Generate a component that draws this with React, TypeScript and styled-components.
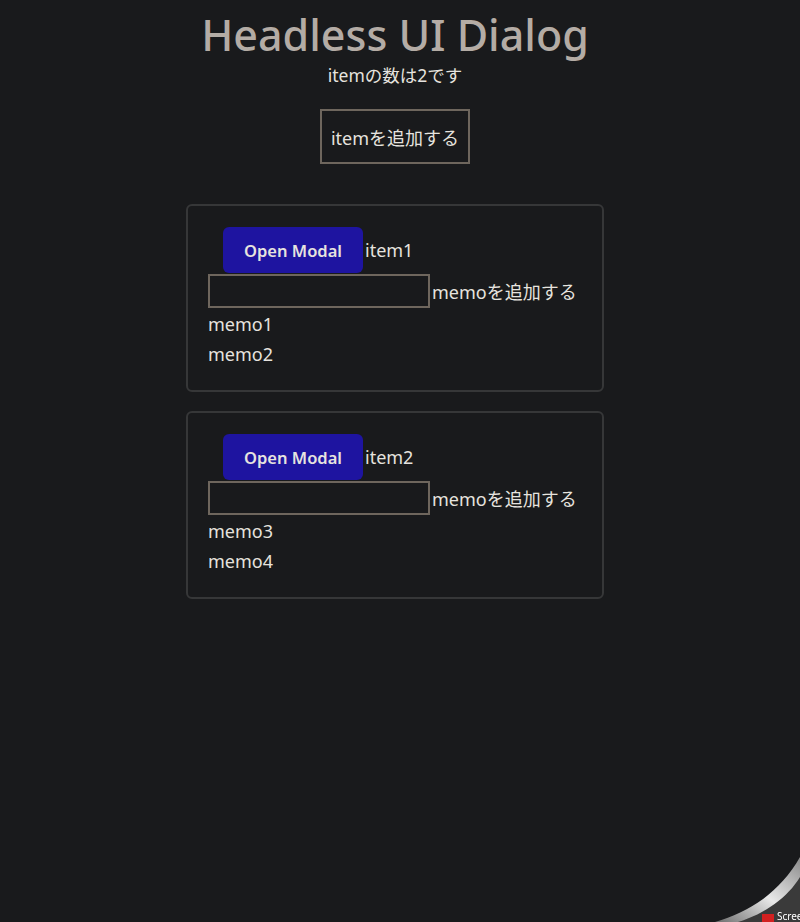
import React, { useState } from "react";
import styled, { createGlobalStyle } from "styled-components";

const GlobalStyle = createGlobalStyle`
  html, body {
    margin: 0;
    padding: 0;
    background: #191a1c;
    color: #e6e3df;
    font-family: "Noto Sans", "Noto Sans CJK JP", sans-serif;
  }
`;

type Item = { id: number; name: string; memos: string[] };

function App() {
  const [items, setItems] = useState<Item[]>([
    { id: 1, name: "item1", memos: ["memo1", "memo2"] },
    { id: 2, name: "item2", memos: ["memo3", "memo4"] },
  ]);

  const addItem = () => {
    const n = items.length + 1;
    setItems([...items, { id: n, name: "item" + n, memos: [] }]);
  };

  return (
    <Page>
      <GlobalStyle />
      <Title>Headless UI Dialog</Title>
      <Count>itemの数は{items.length}です</Count>
      <AddButton onClick={addItem}>itemを追加する</AddButton>
      <List>
        {items.map((item) => (
          <Card key={item.id}>
            <Row>
              <ModalButton>Open Modal</ModalButton>
              <Label>{item.name}</Label>
            </Row>
            <Row>
              <MemoInput />
              <Label>memoを追加する</Label>
            </Row>
            {item.memos.map((m) => (
              <Memo key={m}>{m}</Memo>
            ))}
          </Card>
        ))}
      </List>
      <Curl width="90" height="70" viewBox="0 0 90 70">
        <defs>
          <linearGradient id="curlg" x1="0" y1="1" x2="1" y2="0">
            <stop offset="0" stopColor="#6d6d6d" />
            <stop offset="0.5" stopColor="#e8e8e8" />
            <stop offset="1" stopColor="#8a8a8a" />
          </linearGradient>
        </defs>
        <path d="M5 70 C40 60 70 40 90 5 L90 70 Z" fill="url(#curlg)" />
        <path d="M28 70 C55 62 78 45 90 25 L90 70 Z" fill="#3a3a3a" />
        <rect x="52" y="62" width="12" height="8" fill="#d32020" />
        <CurlText x="67" y="68">Screenpresso</CurlText>
      </Curl>
    </Page>
  );
}

export default App;

const Page = styled.div`
  width: 790px;
  min-height: 922px;
  display: flex;
  flex-direction: column;
  align-items: center;
  text-align: center;
`;

const Title = styled.h1`
  margin: 9px 0 0;
  font-size: 43px;
  line-height: 52px;
  font-weight: 500;
  color: #b4aca5;
`;

const Count = styled.div`
  font-size: 17.5px;
  line-height: 24px;
  margin-top: 2px;
`;

const AddButton = styled.button`
  margin-top: 22px;
  width: 150px;
  height: 55px;
  background: transparent;
  border: 2px solid #6e665d;
  color: #e6e3df;
  font-family: inherit;
  font-size: 18px;
  cursor: pointer;
`;

const List = styled.div`
  margin-top: 40px;
  display: flex;
  flex-direction: column;
  gap: 19px;
`;

const Card = styled.div`
  width: 418px;
  box-sizing: border-box;
  padding: 21px 20px 21px;
  border: 2px solid #363738;
  border-radius: 6px;
  text-align: left;
  display: flex;
  flex-direction: column;
`;

const Row = styled.div`
  display: flex;
  align-items: center;
  margin-bottom: 1px;
`;

const ModalButton = styled.button`
  margin-left: 15px;
  width: 140px;
  height: 46px;
  border: none;
  border-radius: 6px;
  background: #1e14a0;
  color: #e6e3df;
  font-family: inherit;
  font-size: 16.5px;
  font-weight: 600;
  cursor: pointer;
`;

const Label = styled.span`
  margin-left: 2px;
  font-size: 18px;
`;

const MemoInput = styled.input`
  width: 222px;
  height: 34px;
  box-sizing: border-box;
  background: transparent;
  border: 2px solid #6e665d;
  color: #e6e3df;
  margin: 0;
`;

const Memo = styled.div`
  font-size: 18px;
  line-height: 30px;
`;

const Curl = styled.svg`
  position: fixed;
  right: 0;
  bottom: 0;
`;

const CurlText = styled.text`
  font-family: "Noto Sans", sans-serif;
  font-size: 10px;
  fill: #ffffff;
`;
